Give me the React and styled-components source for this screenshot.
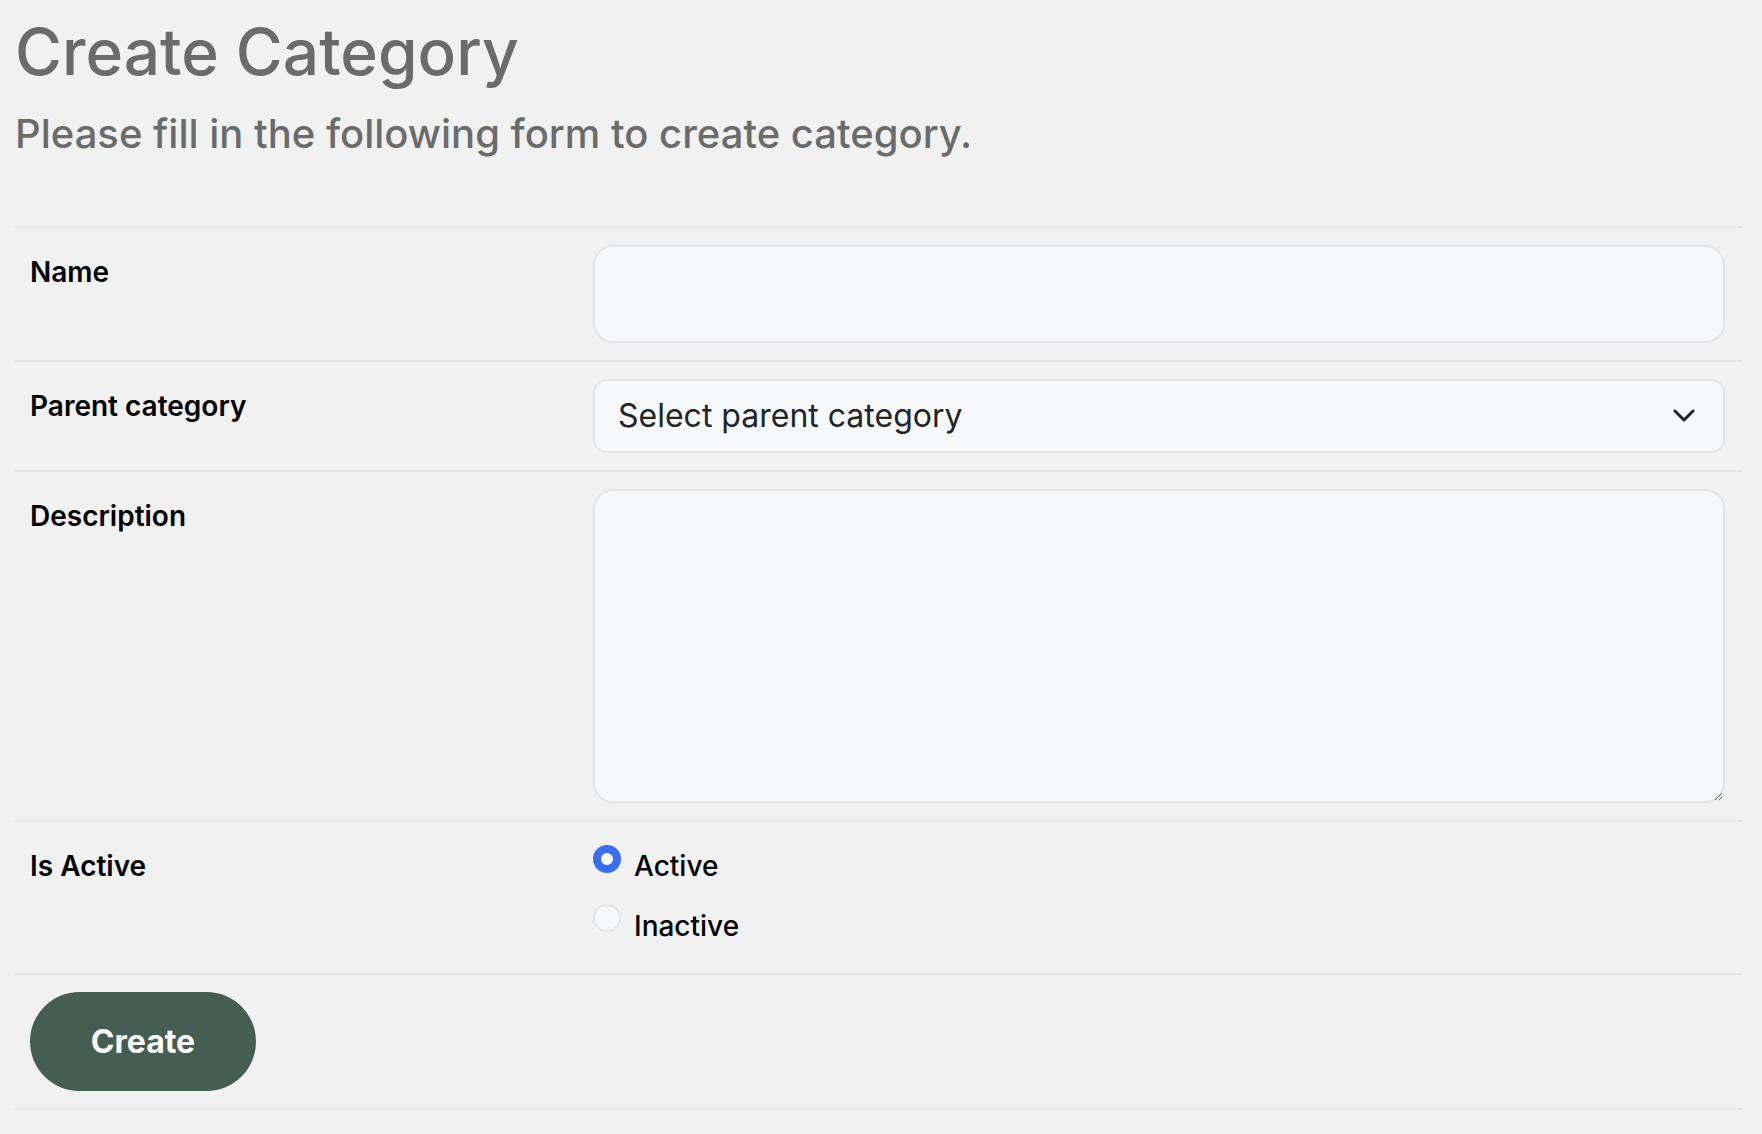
import React from "react";
import styled, { createGlobalStyle } from "styled-components";

const GlobalStyle = createGlobalStyle`
  * { box-sizing: border-box; }
  html, body { margin: 0; padding: 0; }
  body {
    background: #f0f1f0;
    font-family: Inter, "Noto Sans", "Liberation Sans", sans-serif;
    color: #000;
  }
`;

const Page = styled.div`
  padding: 14px 20px 24px 15px;
`;

const Title = styled.h1`
  margin: 0;
  font-size: 64px;
  line-height: 1.2;
  font-weight: 500;
  color: #6b6b6b;
`;

const Subtitle = styled.p`
  margin: 13px 0 0;
  font-size: 40px;
  line-height: 60px;
  font-weight: 500;
  color: #6b6b6b;
`;

const Form = styled.form`
  margin-top: 62px;
  border-bottom: 2px solid #e3e4e7;
`;

const Row = styled.div`
  display: grid;
  grid-template-columns: 578px 1fr;
  border-top: 2px solid #e3e4e7;
  padding: 17px 17px 17px 0;
`;

const Label = styled.label`
  padding: 6px 0 0 15px;
  font-size: 28px;
  line-height: 42px;
  font-weight: 600;
  color: #000;
`;

const fieldBase = `
  width: 100%;
  display: block;
  border: 2px solid #e3e4e7;
  background: #f7f8fa;
  font-family: Inter, "Noto Sans", "Liberation Sans", sans-serif;
  color: #212529;
  outline: none;
  margin: 0;
`;

const TextInput = styled.input`
  ${fieldBase}
  height: 98px;
  border-radius: 20px;
  padding: 0 24px;
  font-size: 32px;
`;

const SelectWrap = styled.div`
  position: relative;
`;

const Select = styled.select`
  ${fieldBase}
  appearance: none;
  -webkit-appearance: none;
  height: 74px;
  border-radius: 14px;
  padding: 0 64px 0 23px;
  font-size: 32px;
`;

const Chevron = styled.svg`
  position: absolute;
  right: 30px;
  top: 50%;
  margin-top: -7px;
  pointer-events: none;
`;

const TextArea = styled.textarea`
  ${fieldBase}
  height: 314px;
  border-radius: 20px;
  padding: 16px 24px;
  font-size: 32px;
  resize: vertical;
`;

const RadioGroup = styled.div`
  display: flex;
  flex-direction: column;
  gap: 18px;
  padding: 6px 0 9px;
`;

const RadioItem = styled.label`
  display: flex;
  align-items: flex-start;
  gap: 13px;
  font-size: 28px;
  line-height: 42px;
  font-weight: 500;
  color: #000;
`;

const Radio = styled.input`
  appearance: none;
  -webkit-appearance: none;
  margin: 0;
  width: 28px;
  height: 28px;
  flex: none;
  border-radius: 50%;
  border: 2px solid #e3e4e7;
  background: #f7f8fa;
  margin-top: ${(p) => p.$offset || 0}px;
  &:checked {
    border: 8px solid #3a6ff4;
    background: #ffffff;
  }
`;

const Button = styled.button`
  width: 226px;
  height: 99px;
  border: none;
  border-radius: 50px;
  background: #445e52;
  color: #ffffff;
  font-family: Inter, "Noto Sans", "Liberation Sans", sans-serif;
  font-size: 32px;
  font-weight: 700;
  margin-left: 15px;
  cursor: pointer;
`;

const ButtonRow = styled.div`
  border-top: 2px solid #e3e4e7;
  padding: 17px 0;
`;

export default function App() {
  return (
    <>
      <GlobalStyle />
      <Page>
        <Title>Create Category</Title>
        <Subtitle>Please fill in the following form to create category.</Subtitle>
        <Form onSubmit={(e) => e.preventDefault()}>
          <Row>
            <Label htmlFor="name">Name</Label>
            <TextInput id="name" type="text" />
          </Row>
          <Row>
            <Label htmlFor="parent">Parent category</Label>
            <SelectWrap>
              <Select id="parent" defaultValue="">
                <option value="">Select parent category</option>
              </Select>
              <Chevron width="22" height="14" viewBox="0 0 22 14" fill="none">
                <polyline
                  points="2,2 11,11 20,2"
                  stroke="#1f2328"
                  strokeWidth="3"
                  strokeLinecap="round"
                  strokeLinejoin="round"
                />
              </Chevron>
            </SelectWrap>
          </Row>
          <Row>
            <Label htmlFor="desc">Description</Label>
            <TextArea id="desc" />
          </Row>
          <Row>
            <Label>Is Active</Label>
            <RadioGroup>
              <RadioItem>
                <Radio type="radio" name="active" defaultChecked />
                Active
              </RadioItem>
              <RadioItem>
                <Radio type="radio" name="active" $offset={-1} />
                Inactive
              </RadioItem>
            </RadioGroup>
          </Row>
          <ButtonRow>
            <Button type="submit">Create</Button>
          </ButtonRow>
        </Form>
      </Page>
    </>
  );
}
